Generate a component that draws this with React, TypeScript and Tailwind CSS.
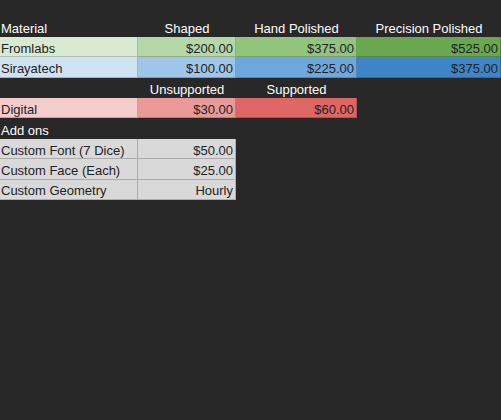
import React from "react";

type Cell = {
  text?: string;
  bg?: string;
  align?: "left" | "right" | "center";
  head?: boolean;
};

const rows: Cell[][] = [
  [
    { text: "Material", head: true },
    { text: "Shaped", head: true, align: "center" },
    { text: "Hand Polished", head: true, align: "center" },
    { text: "Precision Polished", head: true, align: "center" },
  ],
  [
    { text: "Fromlabs", bg: "bg-[#d9ead3]" },
    { text: "$200.00", bg: "bg-[#b6d7a8]", align: "right" },
    { text: "$375.00", bg: "bg-[#93c47d]", align: "right" },
    { text: "$525.00", bg: "bg-[#6aa84f]", align: "right" },
  ],
  [
    { text: "Sirayatech", bg: "bg-[#cfe2f3]" },
    { text: "$100.00", bg: "bg-[#9fc5e8]", align: "right" },
    { text: "$225.00", bg: "bg-[#6fa8dc]", align: "right" },
    { text: "$375.00", bg: "bg-[#3d85c6]", align: "right" },
  ],
  [
    {},
    { text: "Unsupported", head: true, align: "center" },
    { text: "Supported", head: true, align: "center" },
    {},
  ],
  [
    { text: "Digital", bg: "bg-[#f4cccc]" },
    { text: "$30.00", bg: "bg-[#ea9999]", align: "right" },
    { text: "$60.00", bg: "bg-[#e06666]", align: "right" },
    {},
  ],
  [{ text: "Add ons", head: true }, {}, {}, {}],
  [
    { text: "Custom Font (7 Dice)", bg: "bg-[#d9d9d9]" },
    { text: "$50.00", bg: "bg-[#d9d9d9]", align: "right" },
    {},
    {},
  ],
  [
    { text: "Custom Face (Each)", bg: "bg-[#d9d9d9]" },
    { text: "$25.00", bg: "bg-[#d9d9d9]", align: "right" },
    {},
    {},
  ],
  [
    { text: "Custom Geometry", bg: "bg-[#d9d9d9]" },
    { text: "Hourly", bg: "bg-[#d9d9d9]", align: "right" },
    {},
    {},
  ],
];

const SheetCell = ({ cell }: { cell: Cell }) => {
  const justify =
    cell.align === "right"
      ? "justify-end pr-[2px]"
      : cell.align === "center"
        ? "justify-center"
        : "justify-start pl-[1px]";
  return (
    <div
      className={`flex h-[20.375px] items-center overflow-hidden whitespace-nowrap pt-[3px] ${justify} ${
        cell.bg
          ? `${cell.bg} border-r border-b border-black/20 text-[#222222]`
          : "text-white"
      }`}
    >
      {cell.text}
    </div>
  );
};

export default function App() {
  return (
    <div className="h-[420px] w-[501px] bg-[#282828] pt-[16.6px] font-['Liberation_Sans',Arial,sans-serif] text-[13px] leading-none">
      <div className="grid grid-cols-[138px_98px_121px_144px]">
        {rows.map((row, r) =>
          row.map((cell, c) => <SheetCell key={`${r}-${c}`} cell={cell} />)
        )}
      </div>
    </div>
  );
}
